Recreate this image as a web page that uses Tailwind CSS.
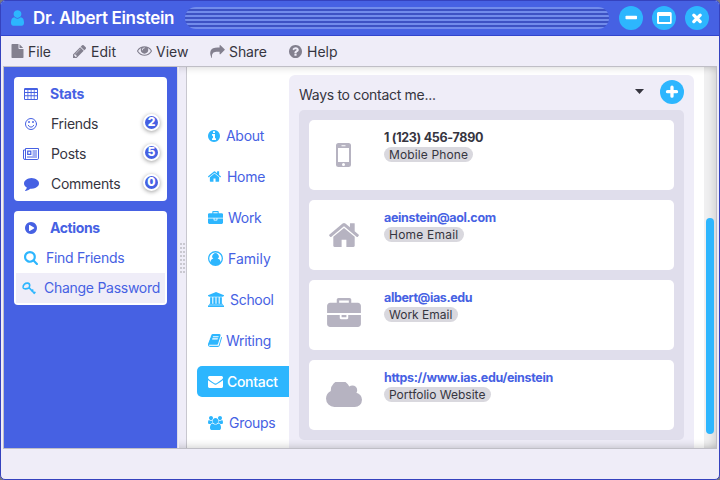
<!DOCTYPE html>
<html lang="en">
<head>
<meta charset="utf-8">
<title>Dr. Albert Einstein</title>
<script src="https://cdn.jsdelivr.net/npm/@tailwindcss/browser@4"></script>
</head>
<body class="w-[720px] h-[480px] overflow-hidden bg-[#77777f] text-[#36353f]" style="font-family:Inter,'Liberation Sans',sans-serif">
<svg class="hidden">
<symbol id="user" viewBox="256 128 1280 1536"><path d="M1536 1399q0 109-62.5 187t-150.5 78h-854q-88 0-150.5-78t-62.5-187q0-85 8.5-160.5t31.5-152 58.5-131 94-89 134.5-34.5q131 128 313 128t313-128q76 0 134.5 34.5t94 89 58.5 131 31.5 152 8.5 160.5zm-256-887q0 159-112.5 271.5t-271.5 112.5-271.5-112.5-112.5-271.5 112.5-271.5 271.5-112.5 271.5 112.5 112.5 271.5z"/></symbol>
<symbol id="file" viewBox="128 0 1536 1792"><path d="M1152 512v-472q22 14 36 28l408 408q14 14 28 36h-472zm-128 32q0 40 28 68t68 28h544v1056q0 40-28 68t-68 28h-1344q-40 0-68-28t-28-68v-1600q0-40 28-68t68-28h800v544z"/></symbol>
<symbol id="pencil" viewBox="128 149 1515 1515"><path d="M491 1536l91-91-235-235-91 91v107h128v128h107zm523-928q0-22-22-22-10 0-17 7l-542 542q-7 7-7 17 0 22 22 22 10 0 17-7l542-542q7-7 7-17zm-54-192l416 416-832 832h-416v-416zm683 96q0 53-37 90l-166 166-416-416 166-165q36-38 90-38 53 0 91 38l235 234q37 39 37 91z"/></symbol>
<symbol id="eye" viewBox="0 384 1792 1152"><path d="M1664 960q-152-236-381-353 61 104 61 225 0 185-131.500 316.500t-316.500 131.500-316.500-131.500-131.500-316.500q0-121 61-225-229 117-381 353 133 205 333.500 326.500t434.500 121.500 434.500-121.500 333.500-326.500zm-720-384q0-20-14-34t-34-14q-125 0-214.500 89.500t-89.500 214.500q0 20 14 34t34 14 34-14 14-34q0-86 61-147t147-61q20 0 34-14t14-34zm848 384q0 34-20 69-140 230-376.500 368.500t-499.500 138.500-499.500-139-376.500-368q-20-35-20-69t20-69q140-229 376.500-368t499.500-139 499.500 139 376.500 368q20 35 20 69z"/></symbol>
<symbol id="share" viewBox="0 64 1792 1600"><path d="M1792 640q0 26-19 45l-512 512q-19 19-45 19t-45-19-19-45v-256h-224q-98 0-175.500 6t-154 21.500-133 42.500-105.500 69.500-80 101-48.500 138.500-17.500 181q0 55 5 123 0 6 2.500 23.500t2.500 26.500q0 15-8.500 25t-23.500 10q-16 0-28-17-7-9-13-22t-13.500-30-10.500-24q-127-285-127-451 0-199 53-333 162-403 875-403h224v-256q0-26 19-45t45-19 45 19l512 512q19 19 19 45z"/></symbol>
<symbol id="help" viewBox="128 128 1536 1536"><path d="M1024 1376v-192q0-14-9-23t-23-9h-192q-14 0-23 9t-9 23v192q0 14 9 23t23 9h192q14 0 23-9t9-23zm256-672q0-88-55.500-163t-138.500-116-170-41q-243 0-371 213-15 24 8 42l132 100q7 6 19 6 16 0 25-12 53-68 86-92 34-24 86-24 48 0 85.500 26t37.500 59q0 38-20 61t-68 45q-63 28-115.500 86.500t-52.500 125.500v36q0 14 9 23t23 9h192q14 0 23-9t9-23q0-19 21.500-49.500t54.500-49.500q32-18 49-28.500t46-35 44.500-48 28-60.500 12.500-81zm384 192q0 209-103 385.500t-279.500 279.500-385.500 103-385.500-103-279.500-279.500-103-385.500 103-385.500 279.500-279.500 385.500-103 385.500 103 279.500 279.500 103 385.500z"/></symbol>
<symbol id="info" viewBox="128 128 1536 1536"><path d="M1152 1376v-160q0-14-9-23t-23-9h-96v-512q0-14-9-23t-23-9h-320q-14 0-23 9t-9 23v160q0 14 9 23t23 9h96v320h-96q-14 0-23 9t-9 23v160q0 14 9 23t23 9h448q14 0 23-9t9-23zm-128-896v-160q0-14-9-23t-23-9h-192q-14 0-23 9t-9 23v160q0 14 9 23t23 9h192q14 0 23-9t9-23zm640 416q0 209-103 385.500t-279.500 279.500-385.500 103-385.500-103-279.500-279.500-103-385.500 103-385.500 279.500-279.500 385.500-103 385.500 103 279.500 279.500 103 385.500z"/></symbol>
<symbol id="home" viewBox="88 253 1616 1283"><path d="M1472 992v480q0 26-19 45t-45 19h-384v-384h-256v384h-384q-26 0-45-19t-19-45v-480q0-1 .5-3t.5-3l575-474 575 474q1 2 1 6zm223-69l-62 74q-8 9-21 11h-3q-13 0-21-7l-692-577-692 577q-12 8-24 7-13-2-21-11l-62-74q-8-10-7-23.500t11-21.500l719-599q32-26 76-26t76 26l244 204v-195q0-14 9-23t23-9h192q14 0 23 9t9 23v408l219 182q10 8 11 21.500t-7 23.500z"/></symbol>
<symbol id="briefcase" viewBox="0 0 1792 1536"><path d="M640 256h512v-128h-512v128zm1152 640v480q0 66-47 113t-113 47h-1472q-66 0-113-47t-47-113v-480h672v160q0 26 19 45t45 19h320q26 0 45-19t19-45v-160h672zm-768 0v128h-256v-128h256zm768-480v384h-1792v-384q0-66 47-113t113-47h352v-160q0-40 28-68t68-28h576q40 0 68 28t28 68v160h352q66 0 113 47t47 113z"/></symbol>
<symbol id="person" viewBox="0 0 28 28"><path fill-rule="evenodd" d="M14 0a14 14 0 1 1 0 28a14 14 0 1 1 0-28zM14 2.600a11.400 11.400 0 0 0-9.500 17.700c.8-3.400 2.600-5.700 5.500-5.700a6 6 0 1 1 8 0c2.900 0 4.700 2.300 5.500 5.700A11.400 11.400 0 0 0 14 2.600z"/></symbol>
<symbol id="school" viewBox="0 0 1920 1792"><path d="M960 0l960 384v128h-128q0 26-20.500 45t-48.500 19h-1526q-28 0-48.500-19t-20.500-45h-128v-128zm-704 640h256v768h128v-768h256v768h128v-768h256v768h128v-768h256v768h59q28 0 48.500 19t20.500 45v64h-1664v-64q0-26 20.500-45t48.500-19h59v-768zm1595 960q28 0 48.500 19t20.500 45v128h-1920v-128q0-26 20.500-45t48.500-19h1782z"/></symbol>
<symbol id="book" viewBox="64 128 1670 1536"><path d="M1703 478q40 57 18 129l-275 906q-19 64-76.500 107.500t-122.500 43.500h-923q-77 0-148.500-53.500t-99.500-131.500q-24-67-2-127 0-4 3-27t4-37q1-8-3-21.500t-3-19.500q2-11 8-21t16.500-23.500 16.500-23.500q23-38 45-91.500t30-91.500q3-10 .5-30t-.5-28q3-11 17-28t17-23q21-36 42-92t25-90q1-9-2.500-32t.5-28q4-13 22-30.500t22-22.500q19-26 42.500-84.500t27.500-96.500q1-8-3-25.500t-2-26.500q2-8 9-18t18-23 17-21q8-12 16.500-30.500t15-35 16-36 19.500-32 26.500-23.500 36-11.500 47.500 5.500l-1 3q38-9 51-9h761q74 0 114 56t18 130l-274 906q-36 119-71.500 153.500t-128.500 34.500h-869q-27 0-38 15-11 16-1 43 24 70 144 70h923q29 0 56-15.500t35-41.500l300-987q7-22 5-57 38 15 59 43zm-1064 2q-4 13 2 22.500t20 9.500h608q13 0 25.500-9.500t16.500-22.500l21-64q4-13-2-22.500t-20-9.500h-608q-13 0-25.500 9.500t-16.500 22.500zm-83 256q-4 13 2 22.500t20 9.500h608q13 0 25.500-9.500t16.500-22.500l21-64q4-13-2-22.500t-20-9.500h-608q-13 0-25.500 9.500t-16.500 22.500z"/></symbol>
<symbol id="mail" viewBox="0 256 1792 1408"><path d="M1792 710v794q0 66-47 113t-113 47h-1472q-66 0-113-47t-47-113v-794q44 49 101 87 362 246 497 345 57 42 92.500 65.500t94.500 48 110 24.500h2q51 0 110-24.500t94.500-48 92.500-65.500q170-123 498-345 57-39 100-87zm0-294q0 79-49 151t-122 123q-376 261-468 325-10 7-42.500 31t-54 38.500-52 32.500-57.500 27-50 9h-2q-23 0-50-9t-57.500-27-52-32.500-54-38.500-42.500-31q-91-64-262-182.500t-205-142.500q-62-42-117-115.500t-55-136.500q0-78 41.500-130t118.500-52h1472q65 0 112.500 47t47.500 113z"/></symbol>
<symbol id="users" viewBox="0 0 1920 1792"><path d="M593 896q-162 5-265 128h-134q-82 0-138-40.500t-56-118.500q0-353 124-353 6 0 43.500 21t97.500 42.500 119 21.500q67 0 133-23-5 37-5 66 0 139 81 256zm1071 637q0 120-73 189.500t-194 69.500h-874q-121 0-194-69.500t-73-189.500q0-53 3.500-103.500t14-109 26.500-108.500 43-97.500 62-81 85.500-53.500 111.500-20q10 0 43 21.500t73 48 107 48 135 21.500 135-21.500 107-48 73-48 43-21.500q61 0 111.500 20t85.500 53.500 62 81 43 97.500 26.500 108.500 14 109 3.500 103.500zm-1024-1277q0 106-75 181t-181 75-181-75-75-181 75-181 181-75 181 75 75 181zm704 384q0 159-112.500 271.500t-271.500 112.500-271.500-112.500-112.500-271.500 112.500-271.500 271.500-112.500 271.500 112.500 112.500 271.500zm576 225q0 78-56 118.500t-138 40.500h-134q-103-123-265-128 81-117 81-256 0-29-5-66 66 23 133 23 59 0 119-21.500t97.500-42.500 43.500-21q124 0 124 353zm-128-609q0 106-75 181t-181 75-181-75-75-181 75-181 181-75 181 75 75 181z"/></symbol>
<symbol id="comment" viewBox="0 256 1792 1536"><path d="M1792 896q0 174-120 321.500t-326 233-450 85.500q-70 0-145-8-198 175-460 242-49 14-114 22-17 2-30.500-9t-17.500-29v-1q-3-4-.5-12t2-10 4.500-9.500l6-9 7-8.500 8-9q7-8 31-34.500t34.500-38 31-39.500 32.500-51 27-59 26-76q-157-89-247.500-220t-90.500-281q0-130 71-248.500t191-204.500 286-136.500 348-50.500 348 50.500 286 136.500 191 204.500 71 248.500z"/></symbol>
<symbol id="search" viewBox="64 128 1664 1664"><path d="M1216 832q0-185-131.500-316.500t-316.500-131.500-316.500 131.500-131.500 316.500 131.500 316.500 316.500 131.500 316.500-131.500 131.500-316.500zm512 832q0 52-38 90t-90 38q-54 0-90-38l-343-342q-179 124-399 124-143 0-273.500-55.500t-225-150-150-225-55.500-273.500 55.500-273.500 150-225 225-150 273.500-55.500 273.500 55.500 225 150 150 225 55.500 273.500q0 220-124 399l343 343q37 37 37 90z"/></symbol>
<symbol id="play" viewBox="128 128 1536 1536"><path d="M896 128q209 0 385.500 103t279.500 279.500 103 385.500-103 385.500-279.500 279.500-385.500 103-385.500-103-279.500-279.500-103-385.500 103-385.500 279.500-279.500 385.500-103zm384 823q32-18 32-55t-32-55l-544-320q-31-19-64-1-32 19-32 56v640q0 37 32 56 16 8 32 8 17 0 32-9z"/></symbol>
<symbol id="cloud" viewBox="64 256 1920 1280"><path d="M1984 1152q0 159-112.500 271.500t-271.500 112.500h-1088q-185 0-316.500-131.500t-131.500-316.500q0-132 71-241.500t187-163.500q-2-28-2-43 0-212 150-362t362-150q158 0 286.500 88t187.500 230q70-62 166-62 106 0 181 75t75 181q0 75-41 138 129 30 213 134.500t84 239.500z"/></symbol>
<symbol id="table" viewBox="0 0 14 12"><path fill-rule="evenodd" d="M1.200 0h11.600Q14 0 14 1.200v9.600Q14 12 12.800 12H1.200Q0 12 0 10.800V1.200Q0 0 1.200 0zM1 2v2h2.500V2zM4.300 2v2h2.400V2zM7.500 2v2h2.300V2zM10.600 2v2H13V2zM1 5v2.300h2.500V5zM4.300 5v2.300h2.400V5zM7.500 5v2.300h2.300V5zM10.600 5v2.300H13V5zM1 8.200V11h2.500V8.200zM4.300 8.200V11h2.400V8.200zM7.500 8.200V11h2.300V8.200zM10.600 8.200V11H13V8.200z"/></symbol>
<symbol id="smile" viewBox="0 0 12 12"><g fill="none" stroke="currentColor" stroke-linecap="round"><circle cx="6" cy="6" r="5.500"/><path d="M3.300 7.300a2.900 2.900 0 0 0 5.400 0"/></g><circle cx="4" cy="4" r=".95"/><circle cx="8" cy="4" r=".95"/></symbol>
<symbol id="news" viewBox="0 0 16 12"><g fill="none" stroke="currentColor"><path d="M2.500 10V.5h13v9.700q0 1.300-1.300 1.300H1.800Q.5 11.500.5 10V2h2M2.500 10q0 1.500-1 1.500"/><path d="M4.700 3.200h3.100v3.100H4.700z" stroke-width="1.200"/><path d="M9.500 3h4.500M9.500 5h4.500M9.500 7h4.500M4 9h10"/></g></symbol>
<symbol id="key" viewBox="0 0 14 13"><g fill="none" stroke="currentColor" stroke-width="1.600"><path d="M1.100 5.700C.8 3 3 .9 5.600 1.100Q7.800 1.300 7.700 3.600L7 6Q4.500 7 2.700 6.800Q1.300 6.700 1.100 5.700z"/><path d="M7 5.600l5.800 6.200M9.300 9.300l2-1.700M11.500 11.600l1.900-1.700"/></g></symbol>
<symbol id="phone" viewBox="0 0 15 24"><path fill-rule="evenodd" d="M2.500 0h10Q15 0 15 2.500v19Q15 24 12.500 24h-10Q0 24 0 21.500v-19Q0 0 2.500 0zM2 5v14h11V5zM5.500 2.300v.9h4v-.9zM7.500 20a1.500 1.500 0 1 0 0 3a1.500 1.500 0 1 0 0-3z"/></symbol>
</svg>

<div class="w-[720px] h-[480px] flex flex-col rounded-[5px] overflow-hidden bg-[#efedf8] border border-[#3542be]">
  <header class="h-[35px] shrink-0 flex items-center bg-[#4661e3] border-b border-[#3245cd] pl-[10px] pr-[10px]">
    <svg class="w-[13px] h-[16px] mr-[9px] fill-[#2db6fe]"><use href="#user"/></svg>
    <h1 class="w-[152px] text-[17px] leading-[20px] font-semibold tracking-[-0.33px] text-white whitespace-nowrap">Dr. Albert Einstein</h1>
    <div class="w-[424px] h-[22px] mr-[10px] rounded-full bg-[repeating-linear-gradient(to_bottom,#728ceb_0px,#728ceb_2px,#3d52c4_2px,#3d52c4_4px)]"></div>
    <div class="flex gap-[9px]">
      <button class="size-[24px] rounded-full bg-[#2db6fe] flex items-center justify-center"><svg viewBox="0 0 24 24" class="size-[24px]"><rect x="6.500" y="9.800" width="11.500" height="3.400" rx=".8" fill="#fff"/></svg></button>
      <button class="size-[24px] rounded-full bg-[#2db6fe] flex items-center justify-center"><svg viewBox="0 0 24 24" class="size-[24px]"><path fill="#fff" fill-rule="evenodd" d="M6.200 6h12q1.500 0 1.500 1.500v9q0 1.500-1.500 1.500h-12q-1.200 0-1.200-1.500v-9Q5 6 6.200 6zM7 10v6h11v-6z"/></svg></button>
      <button class="size-[24px] rounded-full bg-[#2db6fe] flex items-center justify-center"><svg viewBox="0 0 24 24" class="size-[24px]"><path d="M8.800 9.200l6.400 6.400M15.200 9.200l-6.400 6.400" stroke="#fff" stroke-width="3.300" stroke-linecap="round"/></svg></button>
    </div>
  </header>

  <nav class="h-[30px] shrink-0 flex items-center pl-[10px] text-[14px] fill-[#83808f] whitespace-nowrap">
    <div class="w-[62px] flex items-center tracking-[-0.1px]"><svg class="w-[13px] h-[14px] mr-[4px]"><use href="#file"/></svg>File</div>
    <div class="w-[64px] flex items-center"><svg class="w-[13px] h-[13px] mr-[5px]"><use href="#pencil"/></svg>Edit</div>
    <div class="w-[73px] flex items-center"><svg class="w-[15px] h-[10px] mr-[4px]"><use href="#eye"/></svg>View</div>
    <div class="w-[79px] flex items-center tracking-[-0.1px]"><svg class="w-[15px] h-[13px] mr-[4px]"><use href="#share"/></svg>Share</div>
    <div class="flex items-center"><svg class="w-[13px] h-[13px] mr-[5px]"><use href="#help"/></svg>Help</div>
  </nav>

  <main class="relative h-[383px] w-[714px] ml-[2px] shrink-0 flex border border-[#bfbec6] bg-white overflow-hidden">
    <aside class="w-[173px] shrink-0 bg-[#4661e3] pt-[10px] pl-[10px] pr-[10px] text-[14px] tracking-[-0.27px]">
      <section class="h-[124px] bg-white rounded-[4px] pt-[2px] text-[#36353f]">
        <div class="h-[30px] flex items-center pl-[10px] text-[#4661e3] font-bold"><svg class="w-[14px] h-[12px] mr-[12px] fill-current"><use href="#table"/></svg><span class="pb-[2px]">Stats</span></div>
        <div class="h-[30px] flex items-center pl-[9px] pr-[7px]"><span class="w-[28px] flex justify-start pl-[2px] text-[#4661e3] fill-current"><svg class="size-[12px]"><use href="#smile"/></svg></span><span class="pb-px">Friends</span><span class="mt-[-4px] ml-auto size-[17px] rounded-full border-[2px] border-white bg-[#4661e3] text-white text-[12px] font-extrabold tracking-normal flex items-center justify-center shadow-[0_1px_4px_rgba(0,0,0,.38)]">2</span></div>
        <div class="h-[30px] flex items-center pl-[9px] pr-[7px]"><span class="w-[28px] flex text-[#4661e3] fill-current"><svg class="w-[16px] h-[12px]"><use href="#news"/></svg></span><span class="pb-px">Posts</span><span class="mt-[-4px] ml-auto size-[17px] rounded-full border-[2px] border-white bg-[#4661e3] text-white text-[12px] font-extrabold tracking-normal flex items-center justify-center shadow-[0_1px_4px_rgba(0,0,0,.38)]">5</span></div>
        <div class="h-[30px] flex items-center pl-[9px] pr-[7px]"><span class="w-[28px] flex pl-px text-[#4661e3] fill-current"><svg class="w-[15px] h-[13px]"><use href="#comment"/></svg></span><span class="pb-px">Comments</span><span class="mt-[-4px] ml-auto size-[17px] rounded-full border-[2px] border-white bg-[#4661e3] text-white text-[12px] font-extrabold tracking-normal flex items-center justify-center shadow-[0_1px_4px_rgba(0,0,0,.38)]">0</span></div>
      </section>
      <section class="mt-[10px] h-[94px] bg-white rounded-[4px] pt-[2px] px-[2px] text-[#4661e3]">
        <div class="h-[30px] flex items-center pl-[9px] font-bold tracking-[-0.4px]"><svg class="size-[12px] mr-[13px] fill-current"><use href="#play"/></svg><span class="pb-[2px]">Actions</span></div>
        <div class="h-[30px] flex items-center pl-[8px]"><svg class="size-[14px] mr-[8px] fill-[#2db6fe]"><use href="#search"/></svg><span class="pb-[2px]">Find Friends</span></div>
        <div class="h-[30px] flex items-center pl-[6px] bg-[#efedf8] whitespace-nowrap"><svg class="w-[14px] h-[13px] mr-[8px] text-[#2db6fe]"><use href="#key"/></svg><span class="pb-[2px]">Change Password</span></div>
      </section>
    </aside>
    <div class="w-[10px] shrink-0 bg-[#efedf8] border-l border-r border-l-[#dddce8] border-r-[#c8c7cf] flex items-center justify-end">
      <div class="w-[6px] h-[30px] bg-[repeating-linear-gradient(to_bottom,#c9c8d0_0px,#c9c8d0_2px,transparent_2px,transparent_4px)] [mask-image:repeating-linear-gradient(to_right,black_0px,black_2px,transparent_2px,transparent_3px)]"></div>
    </div>
    <div class="w-[102px] shrink-0 pl-[10px] pt-[53px] flex flex-col gap-[10px] text-[14px] tracking-[-0.3px] text-[#4661e3] whitespace-nowrap">
      <div class="h-[31px] flex items-center pl-[11px]"><svg class="size-[12px] mr-[6px] fill-[#2db6fe]"><use href="#info"/></svg>About</div>
      <div class="h-[31px] flex items-center pl-[11px]"><svg class="w-[13px] h-[11px] mr-[6px] fill-[#2db6fe]"><use href="#home"/></svg>Home</div>
      <div class="h-[31px] flex items-center pl-[11px]"><svg class="w-[15px] h-[13px] mr-[5px] fill-[#2db6fe]"><use href="#briefcase"/></svg>Work</div>
      <div class="h-[31px] flex items-center pl-[11px] tracking-normal"><svg class="w-[15px] h-[15px] mr-[5px] fill-[#2db6fe]"><use href="#person"/></svg>Family</div>
      <div class="h-[31px] flex items-center pl-[11px]"><svg class="w-[16px] h-[15px] mr-[6px] fill-[#2db6fe]"><use href="#school"/></svg>School</div>
      <div class="h-[31px] flex items-center pl-[11px]"><svg class="w-[14px] h-[13px] mr-[4px] fill-[#2db6fe]"><use href="#book"/></svg>Writing</div>
      <div class="h-[31px] flex items-center pl-[11px] rounded-l-[5px] bg-[#2db6fe] text-white font-medium"><svg class="w-[15px] h-[12px] mr-[4px] fill-white"><use href="#mail"/></svg>Contact</div>
      <div class="h-[31px] flex items-center pl-[11px]"><svg class="w-[15px] h-[14px] mr-[6px] fill-[#2db6fe]"><use href="#users"/></svg>Groups</div>
    </div>
    <div class="w-[405px] h-[373px] mt-[8px] shrink-0 rounded-t-[6px] bg-[#efedf8] px-[10px]">
      <div class="h-[35px] flex items-center">
        <span class="mt-[4px] w-[336px] text-[14px] tracking-[-0.3px] whitespace-nowrap">Ways to contact me...</span>
        <svg class="w-[9px] h-[5px] mt-[-3px]" viewBox="0 0 9 5"><path d="M0 0h9L4.500 5z" fill="#36353f"/></svg>
        <svg class="size-[24px] ml-auto mt-[-1px]" viewBox="0 0 24 24"><circle cx="12" cy="12" r="12" fill="#2db6fe"/><path d="M12 7.200v9M7.500 11.700h9" stroke="#fff" stroke-width="3.300" stroke-linecap="round"/></svg>
      </div>
      <div class="h-[330px] rounded-[5px] bg-[#e0deec] p-[10px] flex flex-col gap-[10px]">
        <article class="h-[70px] flex rounded-[5px] bg-white">
          <div class="w-[70px] flex items-center justify-center pr-[2px]"><svg class="w-[15px] h-[24px] fill-[#b6b3c1]"><use href="#phone"/></svg></div>
          <div class="pl-[5px] pt-[10px]"><div class="text-[12.5px] tracking-[-0.3px] leading-[16px] font-bold whitespace-nowrap">1 (123) 456-7890</div><div class="w-[89px] h-[15px] mt-px rounded-full bg-[#d9d8de] pl-[5px] text-[12px] tracking-[0.12px] leading-[15px] whitespace-nowrap">Mobile Phone</div></div>
        </article>
        <article class="h-[70px] flex rounded-[5px] bg-white">
          <div class="w-[70px] flex items-center justify-center"><svg class="w-[30px] h-[24px] fill-[#b6b3c1]"><use href="#home"/></svg></div>
          <div class="pl-[5px] pt-[10px]"><div class="text-[12.5px] tracking-[-0.34px] leading-[16px] font-bold whitespace-nowrap text-[#4661e3]">aeinstein@aol.com</div><div class="w-[80px] h-[15px] mt-px rounded-full bg-[#d9d8de] pl-[5px] text-[12px] tracking-[0.22px] leading-[15px] whitespace-nowrap">Home Email</div></div>
        </article>
        <article class="h-[70px] flex rounded-[5px] bg-white">
          <div class="w-[70px] flex items-center justify-center"><svg class="w-[34px] h-[29px] mt-[-5px] fill-[#b6b3c1]"><use href="#briefcase"/></svg></div>
          <div class="pl-[5px] pt-[10px]"><div class="text-[12.5px] tracking-[-0.38px] leading-[16px] font-bold whitespace-nowrap text-[#4661e3]">albert@ias.edu</div><div class="w-[74px] h-[15px] mt-px rounded-full bg-[#d9d8de] pl-[5px] text-[12px] leading-[15px] whitespace-nowrap">Work Email</div></div>
        </article>
        <article class="h-[70px] flex rounded-[5px] bg-white">
          <div class="w-[70px] flex items-center justify-center"><svg class="w-[36px] h-[26px] fill-[#b6b3c1]"><use href="#cloud"/></svg></div>
          <div class="pl-[5px] pt-[10px]"><div class="text-[12.5px] tracking-[-0.34px] leading-[16px] font-bold whitespace-nowrap text-[#4661e3]">https://www.ias.edu/einstein</div><div class="w-[107px] h-[15px] mt-px rounded-full bg-[#d9d8de] pl-[5px] text-[12px] leading-[15px] whitespace-nowrap">Portfolio Website</div></div>
        </article>
      </div>
    </div>
    <div class="ml-auto w-[12px] shrink-0 bg-[#f0f0f1] shadow-[inset_-5px_0_8px_-3px_rgba(0,0,0,.14)] flex justify-center pt-[151px]">
      <div class="w-[8px] h-[216px] rounded-full bg-[#2db6fe]"></div>
    </div>
    <div class="absolute top-0 left-[175px] right-[-8px] bottom-0 pointer-events-none shadow-[inset_0_8px_8px_-8px_rgba(0,0,0,.18),inset_0_-9px_9px_-8px_rgba(0,0,0,.2)]"></div>
  </main>
</div>
</body>
</html>
